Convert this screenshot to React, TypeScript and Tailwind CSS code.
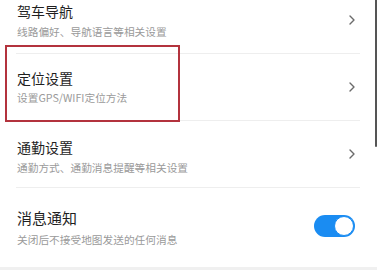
import React from "react";

const Chevron = () => (
  <svg width="6" height="10" viewBox="0 0 6 10" className="self-center shrink-0">
    <polyline points="1,1 5,5 1,9" fill="none" stroke="#6b6b6b" strokeWidth="1.4" strokeLinecap="round" strokeLinejoin="round" />
  </svg>
);

const Toggle = () => (
  <div className="self-center mb-[3px] w-[41px] h-[22px] rounded-full bg-[#1a8cf2] flex items-center justify-end pr-[1px] shrink-0">
    <div className="w-[20px] h-[20px] rounded-full bg-white border border-[#1a8cf2]" />
  </div>
);

export default function App() {
  const font = { fontFamily: '"Noto Sans CJK SC", "Noto Sans", sans-serif' };
  return (
    <div className="relative w-[377px] h-[270px] overflow-hidden bg-white" style={font}>
      <div className="flex flex-col h-full">
        <div className="flex flex-col pl-[16px] pr-[17px] -mt-[13px]">
          <div className="h-[67px] border-b border-[#eeeeee] flex justify-between pr-[5px]">
            <div className="pt-[15px] pl-[1px] flex flex-col gap-[4.5px]">
              <div className="text-[14px] leading-[18px] text-[#1f1f1f]">驾车导航</div>
              <div className="text-[10.7px] leading-[14px] text-[#9a9a9a]">线路偏好、导航语言等相关设置</div>
            </div>
            <Chevron />
          </div>
          <div className="h-[67px] border-b border-[#eeeeee] flex justify-between pr-[5px]">
            <div className="pt-[14.5px] pl-[1px] flex flex-col gap-[4.5px]">
              <div className="text-[14px] leading-[18px] text-[#1f1f1f]">定位设置</div>
              <div className="text-[10.7px] leading-[14px] text-[#9a9a9a]">设置GPS/WIFI定位方法</div>
            </div>
            <Chevron />
          </div>
          <div className="h-[67px] border-b border-[#eeeeee] flex justify-between pr-[5px]">
            <div className="pt-[17px] pl-[1px] flex flex-col gap-[4.5px]">
              <div className="text-[14px] leading-[18px] text-[#1f1f1f]">通勤设置</div>
              <div className="text-[10.7px] leading-[14px] text-[#9a9a9a]">通勤方式、通勤消息提醒等相关设置</div>
            </div>
            <Chevron />
          </div>
          <div className="h-[79px] flex justify-between pr-[5px]">
            <div className="pt-[20px] pl-[1px] flex flex-col gap-[4.5px]">
              <div className="text-[15px] leading-[20px] text-[#1f1f1f]">消息通知</div>
              <div className="text-[10.7px] leading-[14px] text-[#9a9a9a]">关闭后不接受地图发送的任何消息</div>
            </div>
            <Toggle />
          </div>
        </div>
        <div className="flex-1 bg-[#f0f0f0]" />
      </div>
      <div className="absolute left-[5px] top-[45px] w-[175px] h-[77px] border-2 border-[#b3333d]" />
      <div className="absolute right-0 top-0 w-[2px] h-[147px] bg-[#555555] rounded-b-full" />
    </div>
  );
}
